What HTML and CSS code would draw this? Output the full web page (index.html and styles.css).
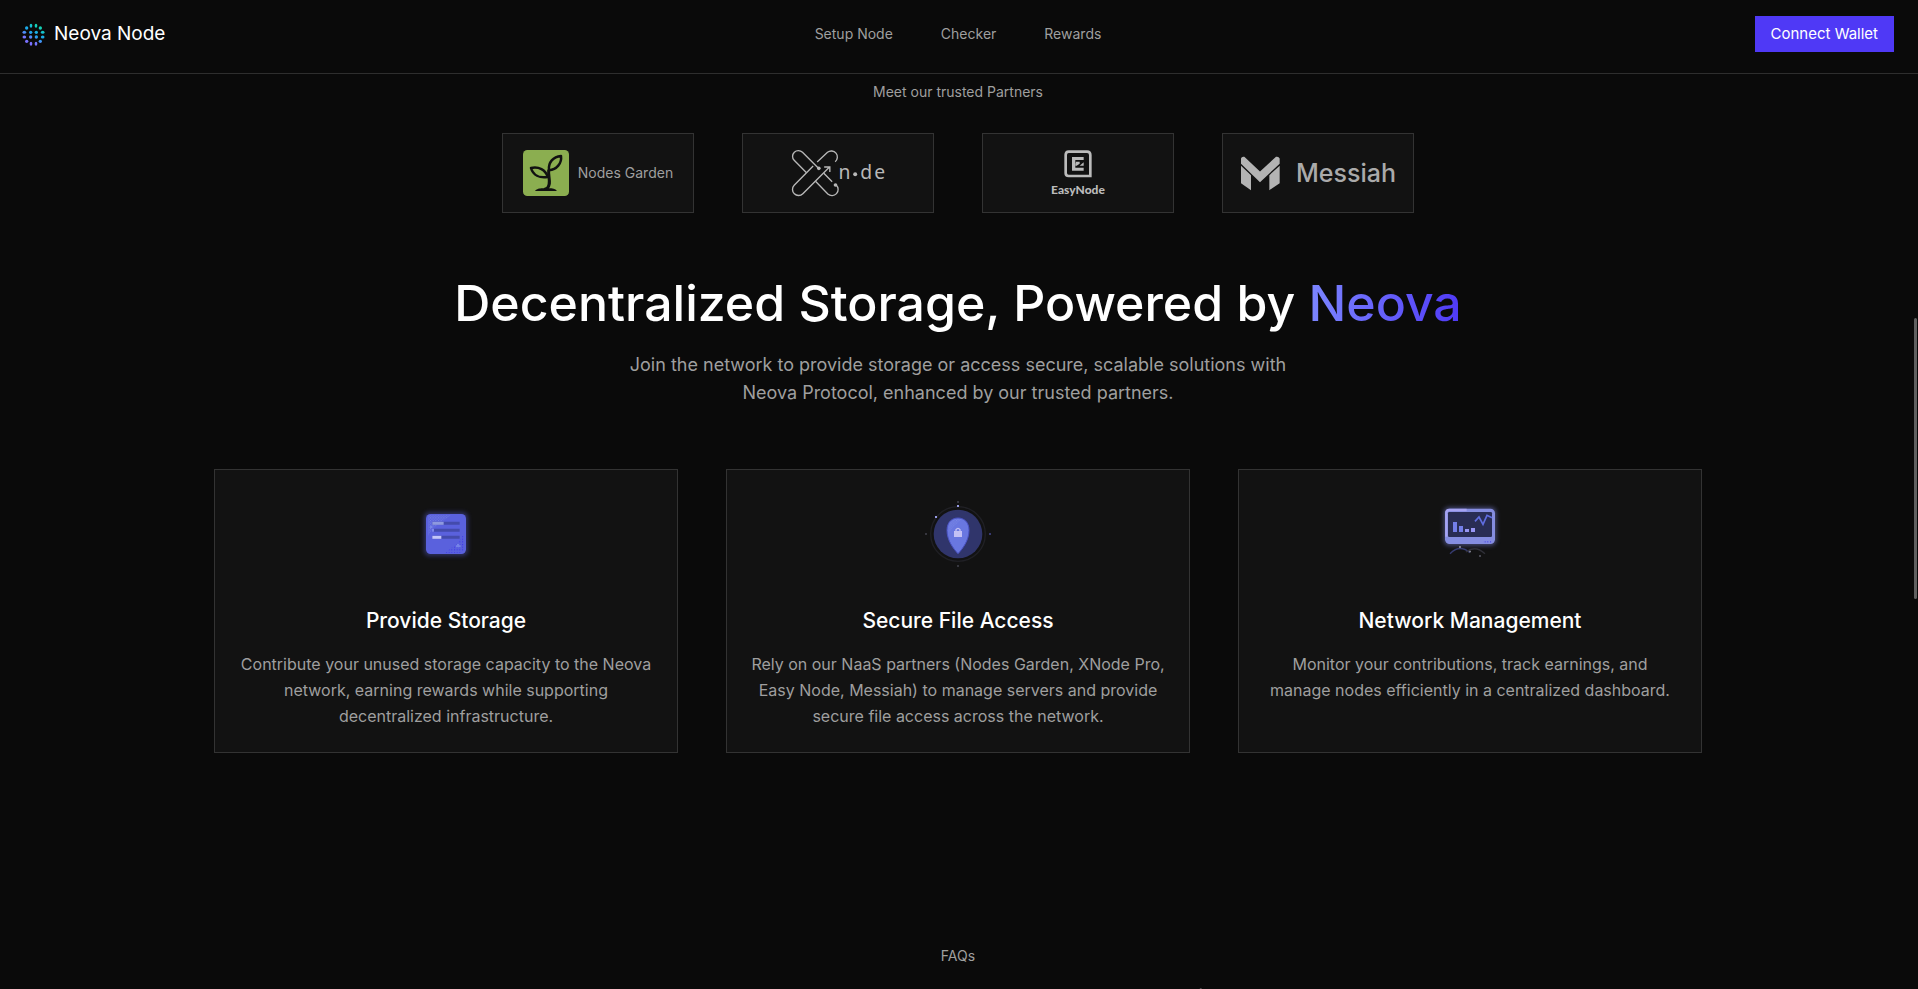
FILE: index.html
```html
<!DOCTYPE html>
<html lang="en">
<head>
<meta charset="utf-8">
<meta name="viewport" content="width=device-width, initial-scale=1">
<title>Neova Node</title>
<link rel="stylesheet" href="styles.css">
</head>
<body>
<header class="navbar">
  <a class="brand" href="#">
    <svg class="brand-mark" viewBox="66 67 69 69" aria-hidden="true">
      <defs><linearGradient id="mark" gradientUnits="userSpaceOnUse" x1="82" y1="130" x2="118" y2="72"><stop offset="0" stop-color="#7c6cff"/><stop offset=".25" stop-color="#7479ff"/><stop offset=".5" stop-color="#1fa2ee"/><stop offset=".68" stop-color="#17b3e4"/><stop offset=".85" stop-color="#12cfc0"/><stop offset="1" stop-color="#14d3a6"/></linearGradient></defs>
      <g fill="url(#mark)">
        <ellipse cx="93" cy="75" rx="4" ry="6"/><ellipse cx="108" cy="75" rx="4" ry="6"/>
        <circle cx="80" cy="82" r="5"/><circle cx="121" cy="82" r="5"/>
        <ellipse cx="73" cy="95" rx="5.500" ry="4.500"/><ellipse cx="128" cy="95" rx="5.500" ry="4.500"/>
        <ellipse cx="73" cy="109" rx="5.500" ry="4.500"/><ellipse cx="128" cy="109" rx="5.500" ry="4.500"/>
        <circle cx="80" cy="122" r="5"/><circle cx="121" cy="122" r="5"/>
        <ellipse cx="93" cy="129" rx="4" ry="6"/><ellipse cx="108" cy="129" rx="4" ry="6"/>
        <circle cx="92" cy="95" r="5"/><circle cx="109" cy="95" r="5"/>
        <circle cx="92" cy="109" r="5"/><circle cx="109" cy="109" r="5"/>
      </g>
    </svg>
    <span>Neova Node</span>
  </a>
  <nav class="nav-links">
    <a href="#">Setup Node</a>
    <a href="#">Checker</a>
    <a href="#">Rewards</a>
  </nav>
  <button class="connect" type="button">Connect Wallet</button>
</header>

<main class="page">
  <section class="partners">
    <p class="eyebrow">Meet our trusted Partners</p>
    <div class="partner-row">
      <div class="partner">
        <svg class="logo-garden" viewBox="96 90 138 138" aria-hidden="true">
          <rect x="96" y="90" width="138" height="138" rx="13" fill="#8bae50"/>
          <g fill="none" stroke="#111" stroke-width="7.500" stroke-linejoin="round" stroke-linecap="round">
            <path d="M210 108C187 110 171 127 174 151C197 149 213 130 210 108Z"/>
            <path d="M120 144C143 139 164 149 170 171C146 175 126 166 120 144Z"/>
            <path d="M173 152C171 171 183 193 167 207" stroke-width="9"/>
          </g>
          <path d="M132 213C138 205 149 205 158 205Q166 199 174 205C184 205 193 206 198 213Z" fill="#111"/>
        </svg>
        <span>Nodes Garden</span>
      </div>
      <div class="partner">
        <svg class="logo-xnode" viewBox="183 87 284 144" role="img" aria-label="XNode">
          <g fill="none" stroke="#b8b8b8" stroke-width="4">
            <path d="M265 145L217 97A17 17 0 0 0 192 121L229 158"/>
            <path d="M261 126L292 97A17 17 0 0 1 315 125"/>
            <path d="M249 138L192 196A18 18 0 0 0 218 221L298 141M282 141H299V156"/>
            <path d="M281 160L306 185M256 184L293 222A18 18 0 0 0 318 195"/>
          </g>
          <circle cx="266" cy="145" r="5.500" fill="#b8b8b8"/><circle cx="316" cy="195" r="5.500" fill="#b8b8b8"/><circle cx="375" cy="163" r="6" fill="#b8b8b8"/>
          <g class="xnode-type"><text x="325" y="177">n</text><text x="390" y="177">d</text><text x="432" y="177">e</text></g>
        </svg>
      </div>
      <div class="partner partner-stack">
        <svg class="logo-easy" viewBox="282 89 84 84" aria-hidden="true">
          <path d="M296 94H351Q361 94 361 104V167H296Q287 167 287 158V104Q287 94 296 94Z" fill="none" stroke="#bbb" stroke-width="8"/>
          <path d="M341 110V119H316V142H341V151H306V110Z" fill="#bbb"/>
          <path d="M318 124H329V130L320 136H316V131ZM341 126V136H329Z" fill="#bbb"/>
        </svg>
        <span class="easy-type">EasyNode</span>
      </div>
      <div class="partner partner-wide">
        <svg class="logo-messiah" viewBox="812 103 120 104" aria-hidden="true">
          <path d="M815 110Q817 103 825 105L872 149L920 105Q928 103 931 110V126L872 181L815 126Z" fill="#b3b3b3"/>
          <path d="M815 132L845 160V205L815 184ZM931 132L900 160V205L931 184Z" fill="#b3b3b3"/>
        </svg>
        <span class="messiah-type">Messiah</span>
      </div>
    </div>
  </section>

  <section class="features">
    <h1>Decentralized Storage, Powered by <span class="accent">Neova</span></h1>
    <p class="lead">Join the network to provide storage or access secure, scalable solutions with<br>Neova Protocol, enhanced by our trusted partners.</p>
    <div class="feature-grid">
      <article class="card">
        <svg class="card-icon" viewBox="48 42 240 240" aria-hidden="true">
          <defs><filter id="glow" x="-30%" y="-30%" width="160%" height="160%"><feGaussianBlur stdDeviation="7"/></filter>
          <pattern id="dots" width="8" height="8" patternUnits="userSpaceOnUse"><path d="M0 0h3v3H0zM4 4h3v3H4z" fill="#8290e6" opacity=".7"/></pattern>
          <pattern id="darkdots" width="8" height="8" patternUnits="userSpaceOnUse"><path d="M0 0h3v3H0z" fill="#3f36e8"/></pattern></defs>
          <rect x="102" y="96" width="132" height="132" rx="16" fill="#5960d8" opacity=".4" filter="url(#glow)"/>
          <rect x="108" y="102" width="120" height="120" rx="14" fill="#5a61dd"/>
          <path d="M114 106H184L158 122L126 148L114 168Z" fill="url(#dots)"/>
          <path d="M222 162V210L214 218H164L200 192Z" fill="url(#darkdots)"/>
          <path d="M127 130H209M127 151H209M127 172H209" stroke="#444bac" stroke-width="9"/>
          <path d="M127 130H161" stroke="#8e99df" stroke-width="9"/><path d="M126 151H132" stroke="#7c86ec" stroke-width="9"/><path d="M127 172H154" stroke="#c4c6fa" stroke-width="9"/>
          <path d="M120 137h7v7h-7zM201 192h7v4h4v6h-14v-6h3z" fill="#7583e8"/>
        </svg>
        <h2>Provide Storage</h2>
        <p>Contribute your unused storage capacity to the Neova<br>network, earning rewards while supporting<br>decentralized infrastructure.</p>
      </article>
      <article class="card">
        <svg class="card-icon" viewBox="54 42 240 240" aria-hidden="true">
          <circle cx="174" cy="162" r="82" fill="none" stroke="#202025" stroke-width="4"/>
          <circle cx="174" cy="162" r="73" fill="#30356b"/>
          <path d="M174 114C192 114 207 126 207 151C207 182 187 207 174 221C161 207 141 182 141 151C141 126 156 114 174 114Z" fill="#6977e0" stroke="#4b53c3" stroke-width="3"/>
          <path d="M148 126L168 117H184L156 145L146 160Z" fill="url(#dots)"/>
          <rect x="162" y="153" width="24" height="18" fill="#c3c1f5"/><path d="M168 154V149Q174 141 180 149V154" fill="none" stroke="#c3c1f5" stroke-width="4"/>
          <g fill="#989ce6"><path d="M171 75h6v6h-6zM105 108h6v6h-6z"/><path d="M171 63h6v6h-6zM171 255h6v6h-6zM75 159h6v6h-6z" fill="#36363e"/><path d="M267 159h6v6h-6z" fill="#383a70"/></g>
        </svg>
        <h2>Secure File Access</h2>
        <p>Rely on our NaaS partners (Nodes Garden, XNode Pro,<br>Easy Node, Messiah) to manage servers and provide<br>secure file access across the network.</p>
      </article>
      <article class="card">
        <svg class="card-icon" viewBox="60 42 240 240" aria-hidden="true">
          <rect x="101" y="81" width="158" height="116" rx="16" fill="#747bce" opacity=".5" filter="url(#glow)"/>
          <rect x="105" y="86" width="150" height="106" rx="14" fill="#858de0"/>
          <path d="M109 170V98Q109 90 118 90H170" fill="none" stroke="#a6a3f2" stroke-width="7"/>
          <rect x="114" y="96" width="132" height="75" rx="4" fill="#292d54"/>
          <path d="M109 174H157V187H122Q112 187 109 179Z" fill="url(#dots)"/><path d="M220 183H246V190H220Z" fill="url(#darkdots)"/>
          <path d="M129 126h12v30h-12zM147 138h12v18h-12z" fill="#737ee8"/><path d="M165 147h12v9h-12zM183 144h12v12h-12z" fill="#9896f4"/>
          <path d="M195 124L207 111L219 133L231 106L246 113" fill="none" stroke="#606de0" stroke-width="5"/>
          <path d="M120 221Q149 192 180 218" fill="none" stroke="#363b70" stroke-width="4"/><path d="M168 216Q196 194 225 221" fill="none" stroke="#303038" stroke-width="4"/>
          <path d="M147 198h6v6h-6zM177 212h6v5h-6z" fill="#7b7c87"/><path d="M207 225h6v6h-6z" fill="#464650"/>
        </svg>
        <h2>Network Management</h2>
        <p>Monitor your contributions, track earnings, and<br>manage nodes efficiently in a centralized dashboard.</p>
      </article>
    </div>
  </section>

  <section class="faq">
    <p class="eyebrow">FAQs</p>
    <h2 class="faq-title">Frequently Asked Questions</h2>
  </section>
</main>
<div class="scroll-thumb" aria-hidden="true"></div>
</body>
</html>
```
FILE: styles.css
```css
* { box-sizing: border-box; margin: 0; padding: 0; }

body {
  height: 100vh;
  overflow: hidden;
  background: #0a0a0a;
  color: #fff;
  font-family: Inter, "Open Sans", sans-serif;
  font-size: 14px;
  line-height: 20px;
}

a { color: inherit; text-decoration: none; }

.navbar {
  display: grid;
  grid-template-columns: 1fr auto 1fr;
  align-items: center;
  padding: 16px 24px 21px 22px;
  border-bottom: 1px solid #2e2e2e;
}

.brand { display: flex; align-items: center; gap: 9px; font-size: 19px; font-weight: 400; line-height: 28px; }
.brand-mark { width: 23px; height: 23px; }
.nav-links { display: flex; gap: 48px; color: #9f9f9f; }

.connect {
  justify-self: end;
  padding: 8px 16px;
  border: 0;
  background: #4f39f6;
  color: #fff;
  font: inherit;
  font-size: 15px;
}

.page { padding: 8px 2px 0 0; }
.eyebrow { color: #9f9f9f; text-align: center; }

.partner-row { display: flex; justify-content: center; gap: 48px; margin-top: 31px; }

.partner {
  display: flex;
  align-items: center;
  justify-content: center;
  gap: 9px;
  width: 192px;
  height: 80px;
  border: 1px solid #333;
  background: #121212;
  color: #9f9f9f;
}

.partner-stack { flex-direction: column; gap: 4px; padding-top: 2px; }
.partner-wide { gap: 16px; }
.logo-garden { width: 46px; height: 46px; }
.logo-xnode { width: 95px; height: 48px; }
.xnode-type { fill: #b8b8b8; font-family: "Noto Sans", sans-serif; font-size: 58px; }
.logo-easy { width: 28px; height: 28px; }
.easy-type { color: #bbb; font-family: Lato, sans-serif; font-size: 12px; font-weight: 900; line-height: 16px; }
.logo-messiah { width: 40px; height: 35px; }
.messiah-type { color: #aaa; font-size: 25px; font-weight: 500; line-height: 32px; }

.features { padding: 60px 24px 0; text-align: center; }
h1 { font-size: 50px; font-weight: 500; line-height: 60px; }

.accent {
  background: linear-gradient(to right, #7c86ff, #4f39f6);
  background-clip: text;
  -webkit-background-clip: text;
  color: transparent;
}

.lead { margin-top: 18px; color: #9f9f9f; font-size: 18px; line-height: 28px; }

.feature-grid {
  display: grid;
  grid-template-columns: repeat(3, 1fr);
  gap: 48px;
  max-width: 1488px;
  margin: 62px auto 0;
}

.card { padding: 24px 16px 23px; border: 1px solid #333; background: #121212; }
.card-icon { display: block; width: 80px; height: 80px; margin: 0 auto; overflow: visible; }
.card h2 { margin-top: 33px; font-size: 21px; font-weight: 500; line-height: 28px; }
.card p { margin-top: 16px; color: #9f9f9f; font-size: 16px; line-height: 26px; }

.faq { padding-top: 193px; text-align: center; }
.faq-title { margin-top: 12px; font-size: 50px; font-weight: 500; line-height: 60px; }

.scroll-thumb {
  position: fixed;
  top: 318px;
  right: 1px;
  width: 3px;
  height: 281px;
  border-radius: 2px;
  background: #606060;
}
```
